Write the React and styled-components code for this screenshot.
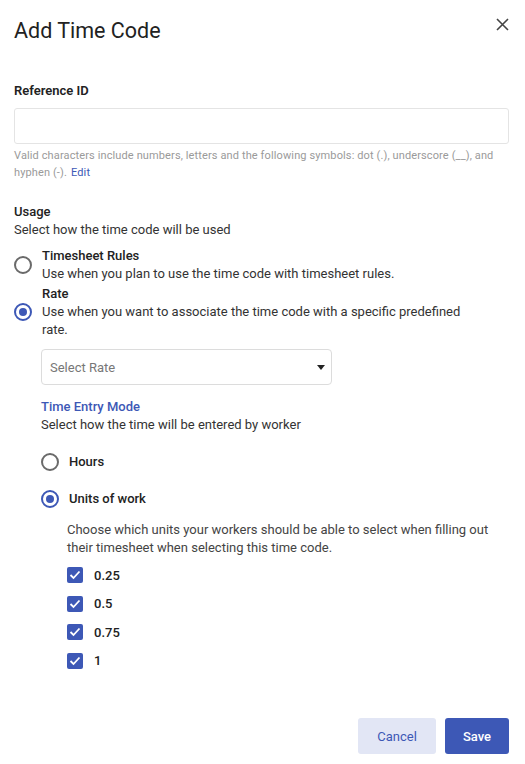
import React, { useState } from 'react'
import styled, { createGlobalStyle } from 'styled-components'

const GlobalStyle = createGlobalStyle`
	body {
		margin: 0;
		background: #fff;
		font-family: Roboto, "Liberation Sans", sans-serif;
		color: #333;
	}
`

const blue = '#3d58b6'

const Dialog = styled.div`
	width: 525px;
	box-sizing: border-box;
	padding: 16px 16px 0 14px;
`

const Header = styled.div`
	display: flex;
	justify-content: space-between;
	align-items: flex-start;
`

const Title = styled.h1`
	margin: 0;
	font-size: 21.5px;
	line-height: 30px;
	font-weight: 400;
	color: #222;
`

const CloseButton = styled.button`
	border: 0;
	background: none;
	padding: 0;
	margin: 2px 0 0 0;
	width: 13px;
	height: 13px;
	display: flex;
	cursor: pointer;
`

const FieldLabel = styled.div`
	margin-top: 36px;
	font-size: 13px;
	line-height: 18px;
	font-weight: 600;
	color: #222;
`

const TextInput = styled.input`
	display: block;
	box-sizing: border-box;
	width: 100%;
	height: 36px;
	margin-top: 8px;
	border: 1px solid #e4e4e4;
	border-radius: 3px;
	outline: none;
	font: inherit;
`

const Help = styled.div`
	margin-top: 3px;
	font-size: 11px;
	line-height: 17px;
	letter-spacing: 0.12px;
	color: #9a9a9a;
`

const HelpLink = styled.a`
	color: ${blue};
	text-decoration: none;
	margin-left: 4px;
`

const SectionTitle = styled.div`
	margin-top: ${p => p.$top || 0}px;
	font-size: 13px;
	line-height: 18px;
	font-weight: 500;
	color: ${p => p.$accent ? blue : '#222'};
`

const SectionSub = styled.div`
	font-size: 13px;
	line-height: 18px;
	color: #333;
`

const Options = styled.div`
	margin-top: ${p => p.$top || 0}px;
	display: flex;
	flex-direction: column;
	gap: ${p => p.$gap || 0}px;
`

const OptionRow = styled.label`
	display: flex;
	align-items: center;
	gap: 10px;
	min-height: ${p => p.$h || 0}px;
	font-size: 13px;
	line-height: 18px;
	cursor: pointer;
`

const RadioMark = styled.span`
	flex: none;
	box-sizing: border-box;
	width: 18px;
	height: 18px;
	border-radius: 50%;
	border: 2px solid ${p => p.$on ? blue : '#6a6a6a'};
	display: flex;
	align-items: center;
	justify-content: center;
	&::after {
		content: '';
		width: 8px;
		height: 8px;
		border-radius: 50%;
		background: ${blue};
		display: ${p => p.$on ? 'block' : 'none'};
	}
`

const OptionText = styled.div``

const OptionName = styled.div`
	font-weight: 500;
	color: #222;
`

const OptionDesc = styled.div`
	color: #333;
	max-width: 440px;
`

const Indent = styled.div`
	padding-left: ${p => p.$left}px;
`

const SelectBox = styled.div`
	margin-top: 10px;
	width: 291px;
	height: 36px;
	box-sizing: border-box;
	border: 1px solid #dcdcdc;
	border-radius: 4px;
	display: flex;
	align-items: center;
	justify-content: space-between;
	padding: 0 6px 0 8px;
	font-size: 13px;
	color: #777;
`

const Caret = styled.span`
	width: 0;
	height: 0;
	border-left: 4px solid transparent;
	border-right: 4px solid transparent;
	border-top: 5px solid #222;
`

const Paragraph = styled.p`
	margin: 4px 0 0;
	font-size: 13px;
	line-height: 18px;
	color: #444;
`

const CheckList = styled.div`
	margin-top: 4px;
	display: flex;
	flex-direction: column;
`

const CheckRow = styled.label`
	display: flex;
	align-items: center;
	gap: 11px;
	height: 28.5px;
	font-size: 13px;
	font-weight: 500;
	color: #222;
`

const CheckMark = styled.span`
	width: 16px;
	height: 16px;
	border-radius: 2px;
	background: ${blue};
	display: flex;
	align-items: center;
	justify-content: center;
`

const Footer = styled.div`
	margin-top: 43px;
	display: flex;
	justify-content: flex-end;
	gap: 9px;
`

const Button = styled.button`
	height: 36px;
	padding: 0 ${p => p.$pad}px;
	border: 0;
	border-radius: 3px;
	font-family: inherit;
	font-size: 13px;
	font-weight: ${p => p.$primary ? 500 : 400};
	background: ${p => p.$primary ? blue : '#e2e6f5'};
	color: ${p => p.$primary ? '#fff' : blue};
	cursor: pointer;
`

const units = ['0.25', '0.5', '0.75', '1']

export default function App() {
	const [usage, setUsage] = useState('rate')
	const [mode, setMode] = useState('units')

	return <Dialog>
		<GlobalStyle />
		<Header>
			<Title>Add Time Code</Title>
			<CloseButton aria-label="Close">
				<svg width="13" height="13" viewBox="0 0 13 13">
					<path d="M1 1L12 12M12 1L1 12" stroke="#444" strokeWidth="1.6" />
				</svg>
			</CloseButton>
		</Header>

		<FieldLabel>Reference ID</FieldLabel>
		<TextInput />
		<Help>
			Valid characters include numbers, letters and the following symbols: dot (.), underscore (__), and hyphen (-).
			<HelpLink href="#">Edit</HelpLink>
		</Help>

		<SectionTitle $top={22}>Usage</SectionTitle>
		<SectionSub>Select how the time code will be used</SectionSub>

		<Options $top={8} $gap={2}>
			<OptionRow onClick={() => setUsage('rules')}>
				<RadioMark $on={usage === 'rules'} />
				<OptionText>
					<OptionName>Timesheet Rules</OptionName>
					<OptionDesc>Use when you plan to use the time code with timesheet rules.</OptionDesc>
				</OptionText>
			</OptionRow>
			<OptionRow onClick={() => setUsage('rate')}>
				<RadioMark $on={usage === 'rate'} />
				<OptionText>
					<OptionName>Rate</OptionName>
					<OptionDesc>Use when you want to associate the time code with a specific predefined rate.</OptionDesc>
				</OptionText>
			</OptionRow>
		</Options>

		<Indent $left={27}>
			<SelectBox>
				Select Rate
				<Caret />
			</SelectBox>

			<SectionTitle $top={13} $accent>Time Entry Mode</SectionTitle>
			<SectionSub>Select how the time will be entered by worker</SectionSub>

			<Options $top={9}>
				<OptionRow $h={37} onClick={() => setMode('hours')}>
					<RadioMark $on={mode === 'hours'} />
					<OptionName>Hours</OptionName>
				</OptionRow>
				<OptionRow $h={37} onClick={() => setMode('units')}>
					<RadioMark $on={mode === 'units'} />
					<OptionName>Units of work</OptionName>
				</OptionRow>
			</Options>

			<Indent $left={26}>
				<Paragraph>Choose which units your workers should be able to select when filling out their timesheet when selecting this time code.</Paragraph>
				<CheckList>
					{ units.map(u => (
						<CheckRow key={u}>
							<CheckMark>
								<svg width="12" height="10" viewBox="0 0 12 10">
									<path d="M1.5 5L4.5 8L10.5 1.5" stroke="#fff" strokeWidth="1.8" fill="none" />
								</svg>
							</CheckMark>
							{u}
						</CheckRow>
					)) }
				</CheckList>
			</Indent>
		</Indent>

		<Footer>
			<Button $pad={19}>Cancel</Button>
			<Button $pad={18} $primary>Save</Button>
		</Footer>
	</Dialog>
}
